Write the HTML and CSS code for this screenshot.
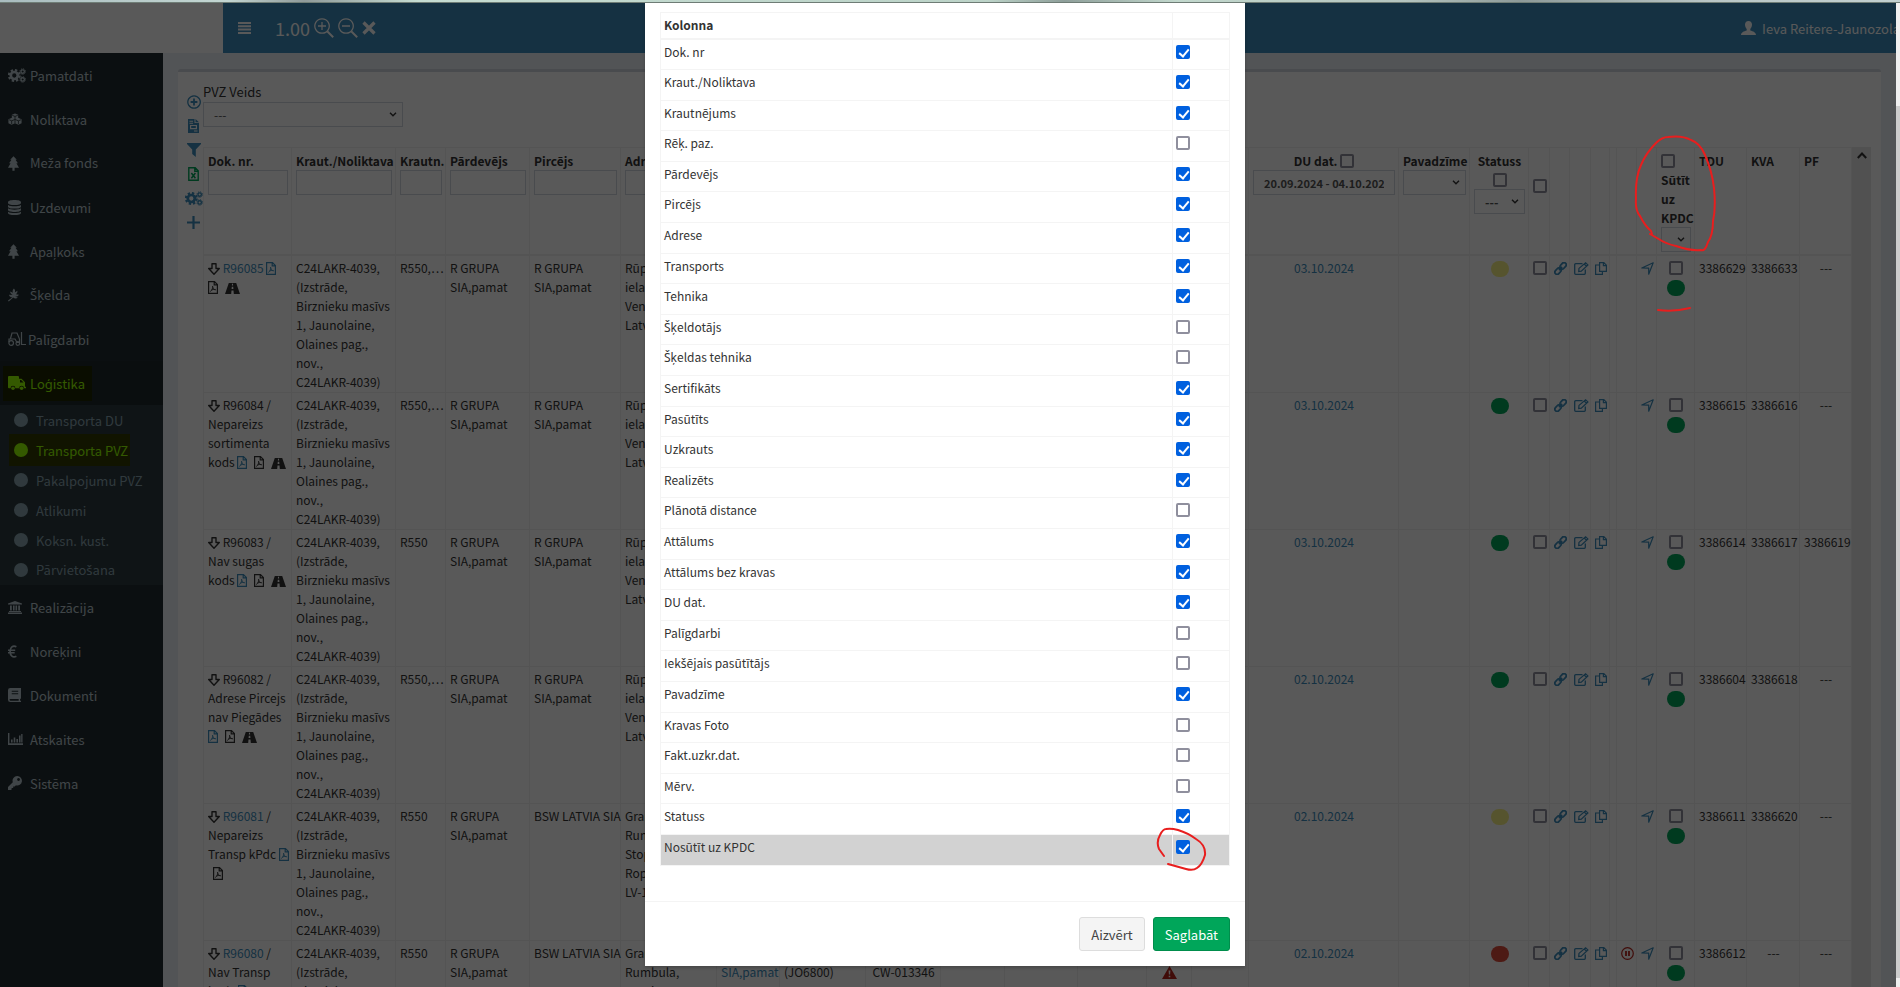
FILE: index.html
```
<!DOCTYPE html>
<html lang="lv">
<head>
    <meta charset="UTF-8">
    <meta name="viewport" content="width=device-width, initial-scale=1.0">
    <title>Transporta PVZ</title>
    <link rel="stylesheet" href="styles.css">
</head>
<body>
    <!-- icons -->
    <svg class="icon-defs" aria-hidden="true">
        <symbol id="i-cogs" viewBox="0 0 20 16"><circle cx="7" cy="8" r="3.9" fill="none" stroke="currentColor" stroke-width="3"/><circle cx="7" cy="8" r="6" fill="none" stroke="currentColor" stroke-width="2.4" stroke-dasharray="2.6 2.11"/><circle cx="16.3" cy="3.6" r="1.9" fill="none" stroke="currentColor" stroke-width="1.5"/><circle cx="16.3" cy="3.6" r="3" fill="none" stroke="currentColor" stroke-width="1.1" stroke-dasharray="1.4 .95"/><circle cx="16.3" cy="12.4" r="1.9" fill="none" stroke="currentColor" stroke-width="1.5"/><circle cx="16.3" cy="12.4" r="3" fill="none" stroke="currentColor" stroke-width="1.1" stroke-dasharray="1.4 .95"/></symbol>
        <symbol id="i-cubes" viewBox="0 0 16 14"><path fill="currentColor" d="M8 0l3.600 1.500v3.600l3.900 1.600v4.600L11.900 13 8 11.300 4.100 13 .5 11.300V6.700l3.900-1.600V1.500z"/><path fill="none" stroke="#222d32" stroke-width=".9" d="M4.800 2.200L8 3.500l3.200-1.300M8 3.500v3M1.300 7.300l2.900 1.200L8 6.900l3.900 1.600 2.900-1.200M4.200 8.500v3.700M8 7v4.200M11.900 8.500v3.700"/></symbol>
        <symbol id="i-tree" viewBox="0 0 12 16"><path fill="currentColor" d="M6 0l3.600 4H8.200l2.600 3.800H9.200L12 12.600H7.200V16H4.800v-3.400H0l2.800-4.800H1.200L3.800 4H2.400z"/></symbol>
        <symbol id="i-db" viewBox="0 0 14 16"><path fill="currentColor" d="M0 2.200C0 1 3 0 7 0s7 1 7 2.200v1C14 4.500 11 5.400 7 5.400S0 4.500 0 3.200zM0 5.200c1.600 1.100 4.200 1.400 7 1.400s5.400-.3 7-1.400v1.900c0 1.200-3 2.100-7 2.100S0 8.300 0 7.100zM0 8.900c1.600 1.100 4.200 1.400 7 1.400s5.400-.3 7-1.400v1.900c0 1.200-3 2.100-7 2.100s-7-.9-7-2.100zM0 12.500c1.600 1.100 4.200 1.400 7 1.400s5.400-.3 7-1.400v1.300C14 15.100 11 16 7 16s-7-.9-7-2.200z"/></symbol>
        <symbol id="i-leaf" viewBox="0 0 12 14"><path fill="currentColor" d="M6.500 0C5 1.500 4.700 3 5.400 4.500L2.300 3.300C2.500 5.200 3.300 6.300 5 7L1 6.600c.7 2 2 2.900 3.900 2.800L0 13.100l.8.900 4.900-4.200c1.500 1.200 3.300 1.300 5 .2L7.800 8.600c1.700.3 3-.4 4.200-2L8.500 6.200C10 5.300 10.500 4 10.200 2.400L7.400 4.300C8.100 2.800 7.700 1.200 6.500 0z"/></symbol>
        <symbol id="i-loader" viewBox="0 0 18 14"><path fill="none" stroke="currentColor" stroke-width="1.200" d="M2.500 6.500L4 1h5l2.500 6v4M1 10V7h6l2 3.500h2M13.500 0v12.500H18"/><circle cx="3.200" cy="11" r="2.300" fill="none" stroke="currentColor" stroke-width="1.200"/><circle cx="9.800" cy="11.500" r="1.800" fill="none" stroke="currentColor" stroke-width="1.200"/></symbol>
        <symbol id="i-truck" viewBox="0 0 18 14"><path fill="currentColor" d="M0 1a1 1 0 0 1 1-1h9a1 1 0 0 1 1 1v1.800h2.600L17 6.200v4.600h1v1.400h-2a2.400 2.400 0 0 0-4.800 0H7.400a2.400 2.400 0 0 0-4.800 0H1a1 1 0 0 1-1-1zM12 4v2.600h3.600L13.100 4z"/><circle cx="5" cy="12.200" r="1.800" fill="currentColor"/><circle cx="13.600" cy="12.200" r="1.800" fill="currentColor"/></symbol>
        <symbol id="i-bank" viewBox="0 0 14 13"><path fill="currentColor" d="M7 0l7 2.600v1H0v-1zM2 4.400h1.800V9.500H2zM5 4.400h1.600V9.500H5zM7.500 4.400h1.600V9.500H7.500zM10.200 4.400H12V9.500h-1.800zM1 10h12v1H1zM0 11.600h14V13H0z"/></symbol>
        <symbol id="i-euro" viewBox="0 0 10 14"><path fill="none" stroke="currentColor" stroke-width="1.900" d="M9.300 1.800C5.500-.2 2.300 2.300 2.300 7s3.200 7.200 7 5.200M0 5.600h8M0 8.400h7.400"/></symbol>
        <symbol id="i-book" viewBox="0 0 14 15"><path fill="currentColor" fill-rule="evenodd" d="M2.500 0H14v11.500h-1v2.100h1V15H2.500A2.500 2.500 0 0 1 0 12.500v-10A2.500 2.500 0 0 1 2.500 0zM4 3v1.100h7V3zm0 2.600v1.100h7V5.600zM2.500 11.800c-1.200 0-1.200 1.800 0 1.800h9v-1.800z"/></symbol>
        <symbol id="i-chart" viewBox="0 0 15 12"><path fill="currentColor" d="M0 0h1.400v10.300H15V12H0zM3 6.500h1.600v3H3zM5.700 4.500h1.600v5H5.700zM8.400 6h1.600v3.500H8.400zM11 2.500h1.600v7H11zM13.200 1h1.300v8.500h-1.300z"/></symbol>
        <symbol id="i-key" viewBox="0 0 14 14"><path fill="currentColor" fill-rule="evenodd" d="M9.300 0a4.700 4.700 0 1 1-1.400 9.200L6.800 10.400H5.200v1.500H3.600v1.500L3 14H0v-2.900l4.800-4.900A4.700 4.700 0 0 1 9.300 0zm1.200 2.100a1.400 1.400 0 1 0 .1 0z"/></symbol>
        <symbol id="i-bars" viewBox="0 0 13 12"><path fill="currentColor" d="M0 0h13v2H0zM0 3.300h13v2H0zM0 6.600h13v2H0zM0 9.900h13v2H0z"/></symbol>
        <symbol id="i-zoomin" viewBox="0 0 20 20"><path fill="none" stroke="currentColor" stroke-width="1.300" d="M8 .8a7.200 7.200 0 1 0 .1 0zM4 8h8M8 4v8"/><path stroke="currentColor" stroke-width="2" d="M13.200 13.200l6 6"/></symbol>
        <symbol id="i-zoomout" viewBox="0 0 20 20"><path fill="none" stroke="currentColor" stroke-width="1.300" d="M8 .8a7.200 7.200 0 1 0 .1 0zM4 8h8"/><path stroke="currentColor" stroke-width="2" d="M13.200 13.200l6 6"/></symbol>
        <symbol id="i-times" viewBox="0 0 14 14"><path stroke="currentColor" stroke-width="3.200" d="M1.500 1.500l11 11M12.500 1.500l-11 11"/></symbol>
        <symbol id="i-user" viewBox="0 0 15 14"><path fill="currentColor" d="M7.500 0C5.300 0 4 1.500 4 3.600c0 1.700.7 3.400 1.700 4.300v1.500C3 10.200 0 11.300 0 14h15c0-2.700-3-3.800-5.700-4.600V7.900c1-.9 1.700-2.600 1.700-4.300C11 1.500 9.700 0 7.500 0z"/></symbol>
        <symbol id="i-pluscircle" viewBox="0 0 14 14"><path fill="none" stroke="currentColor" stroke-width="1.300" d="M7 .8a6.200 6.200 0 1 0 .1 0z"/><path stroke="currentColor" stroke-width="1.800" d="M3.600 7h6.800M7 3.600v6.800"/></symbol>
        <symbol id="i-doc" viewBox="0 0 11 14"><path fill="currentColor" fill-rule="evenodd" d="M0 0h6.500v4H11v10H0zM7.500 0L11 3.200H7.500zM1.500 1.800v.9H5v-.9zm0 2v.9H5v-.9zM2 6v4.200h7V6zm1.200 1.100h4.600v2H3.200zM6 11.600v.9h3.500v-.9z"/></symbol>
        <symbol id="i-filter" viewBox="0 0 14 14"><path fill="currentColor" d="M0 0h14v1L8.800 6.600V14L5.200 11V6.600L0 1z"/></symbol>
        <symbol id="i-excel" viewBox="0 0 11 14"><path fill="none" stroke="currentColor" stroke-width="1.400" d="M.8.8h6.400l3 3v9.400H.8zM6.800.8v3.400h3.400"/><path stroke="currentColor" stroke-width="1.500" d="M3.400 6l4 5.200M7.400 6l-4 5.200"/></symbol>
        <symbol id="i-plus" viewBox="0 0 13 13"><path stroke="currentColor" stroke-width="2.200" d="M0 6.500h13M6.500 0v13"/></symbol>
        <symbol id="i-down" viewBox="0 0 12 12"><path fill="none" stroke="currentColor" stroke-width="1.400" stroke-linejoin="round" d="M4 .7h4v4.800h3.300L6 11.200.7 5.500H4z"/></symbol>
        <symbol id="i-pdf" viewBox="0 0 10 13"><path fill="none" stroke="currentColor" stroke-width="1.200" d="M.6.6h5.900l2.900 2.900v8.900H.6zM6.200.6v3.200h3.200"/><path fill="none" stroke="currentColor" stroke-width=".9" d="M2.200 10.500C4 9.500 5 7 4.600 5M4.600 5.500C5 8 6.200 9 8 8.800M3.200 9.200c1.300-.7 2.600-.9 4-.8"/></symbol>
        <symbol id="i-road" viewBox="0 0 15 11"><path fill="currentColor" fill-rule="evenodd" d="M3.800 0h7.400L15 11H8.800l-.3-3.500h-2L6.200 11H0zM7 .8l-.1 1.700h1.200L8 .8zM6.800 3.700l-.2 2.300h1.800l-.2-2.300z"/></symbol>
        <symbol id="i-link" viewBox="0 0 14 14"><g fill="none" stroke="currentColor" stroke-width="1.900"><rect x="6" y="1.700" width="7.600" height="4.800" rx="2.400" transform="rotate(-48 9.800 4.100)"/><rect x=".5" y="7.500" width="7.600" height="4.800" rx="2.400" transform="rotate(-48 4.300 9.900)"/><path d="M5.400 8.700l3.300-3.500"/></g></symbol>
        <symbol id="i-edit" viewBox="0 0 15 13"><path fill="none" stroke="currentColor" stroke-width="1.300" d="M8.500 1.700H1.700a1 1 0 0 0-1 1v8.600a1 1 0 0 0 1 1h8.600a1 1 0 0 0 1-1V7.500"/><path fill="none" stroke="currentColor" stroke-width="1.200" d="M5 6.400L11.600.8l2.300 2.100-6.600 6.200-2.600.4zM10.200 2l2.200 2.200"/></symbol>
        <symbol id="i-copy" viewBox="0 0 12 13"><path fill="none" stroke="currentColor" stroke-width="1.200" d="M4.600.6h4.200l2.600 2.600v6.200H4.600zM8.400.6v3h3M4.600 3H.6v9.400h6.800v-3"/></symbol>
        <symbol id="i-send" viewBox="0 0 13 13"><path fill="none" stroke="currentColor" stroke-width="1.200" stroke-linejoin="round" d="M12.200.8L7.700 12.200V6.100L.8 6z"/></symbol>
        <symbol id="i-pause" viewBox="0 0 13 13"><circle cx="6.500" cy="6.500" r="5.800" fill="none" stroke="currentColor" stroke-width="1.200"/><path stroke="currentColor" stroke-width="1.800" d="M5 4v5M8 4v5"/></symbol>
        <symbol id="i-warn" viewBox="0 0 15 13"><path fill="currentColor" fill-rule="evenodd" d="M7.500 0L15 13H0zM6.600 4.400l.3 4.200h1.200l.3-4.200zm.1 5.300v1.600h1.600V9.700z"/></symbol>
        <symbol id="i-chev" viewBox="0 0 8 5"><path fill="none" stroke="currentColor" stroke-width="1.400" d="M1 .7l3 3 3-3"/></symbol>
        <symbol id="i-up" viewBox="0 0 10 7"><path fill="none" stroke="currentColor" stroke-width="2" d="M.8 6L5 1.500 9.200 6"/></symbol>
    </svg>

    <div class="top-strip"></div>
    <div class="app">
        <header class="main-header">
            <div class="logo"></div>
            <nav class="navbar">
                <button type="button" class="icon-btn menu-btn" aria-label="Izvēlne"><svg width="13" height="12"><use href="#i-bars"/></svg></button>
                <span class="zoom-value">1.00</span>
                <button type="button" class="icon-btn" aria-label="Tuvināt"><svg width="20" height="20"><use href="#i-zoomin"/></svg></button>
                <button type="button" class="icon-btn" aria-label="Tālināt"><svg width="20" height="20"><use href="#i-zoomout"/></svg></button>
                <button type="button" class="icon-btn" aria-label="Atiestatīt"><svg width="14" height="14"><use href="#i-times"/></svg></button>
                <a href="#" class="user"><svg width="15" height="14"><use href="#i-user"/></svg><span>Ieva Reitere-Jaunozola</span></a>
            </nav>
        </header>

        <div class="wrapper">
            <aside class="sidebar">
                <ul class="menu">
                    <li><a href="#"><svg width="18" height="15"><use href="#i-cogs"/></svg><span>Pamatdati</span></a></li>
                    <li><a href="#"><svg width="14" height="13"><use href="#i-cubes"/></svg><span>Noliktava</span></a></li>
                    <li><a href="#"><svg width="11" height="15"><use href="#i-tree"/></svg><span>Me<b class="lv">ž</b>a fonds</span></a></li>
                    <li><a href="#"><svg width="13" height="15"><use href="#i-db"/></svg><span>Uzdevumi</span></a></li>
                    <li><a href="#"><svg width="11" height="15"><use href="#i-tree"/></svg><span>Apaļkoks</span></a></li>
                    <li><a href="#"><svg width="11" height="14"><use href="#i-leaf"/></svg><span><b class="lv">Šķ</b>elda</span></a></li>
                    <li class="tight"><a href="#"><svg width="18" height="14"><use href="#i-loader"/></svg><span>Palīgdarbi</span></a></li>
                    <li class="active">
                        <a href="#"><mark><svg width="18" height="14"><use href="#i-truck"/></svg><span>Loģistika</span></mark></a>
                        <ul class="submenu">
                            <li><a href="#"><i></i>Transporta DU</a></li>
                            <li><a href="#"><mark><i></i>Transporta PVZ</mark></a></li>
                            <li><a href="#"><i></i>Pakalpojumu PVZ</a></li>
                            <li><a href="#"><i></i>Atlikumi</a></li>
                            <li><a href="#"><i></i>Koksn. kust.</a></li>
                            <li><a href="#"><i></i><span>Pārvieto<b class="lv">š</b>ana</span></a></li>
                        </ul>
                    </li>
                    <li><a href="#"><svg width="14" height="13"><use href="#i-bank"/></svg><span>Realizācija</span></a></li>
                    <li><a href="#"><svg width="9" height="13"><use href="#i-euro"/></svg><span>Norēķini</span></a></li>
                    <li><a href="#"><svg width="13" height="14"><use href="#i-book"/></svg><span>Dokumenti</span></a></li>
                    <li><a href="#"><svg width="15" height="12"><use href="#i-chart"/></svg><span>Atskaites</span></a></li>
                    <li><a href="#"><svg width="14" height="14"><use href="#i-key"/></svg><span>Sistēma</span></a></li>
                </ul>
            </aside>

            <main class="content">
                <div class="box">
                    <div class="tools">
                        <button type="button" class="icon-btn" aria-label="Pievienot"><svg width="14" height="14"><use href="#i-pluscircle"/></svg></button>
                        <button type="button" class="icon-btn" aria-label="Dokuments"><svg width="11" height="14"><use href="#i-doc"/></svg></button>
                        <button type="button" class="icon-btn" aria-label="Filtrs"><svg width="14" height="14"><use href="#i-filter"/></svg></button>
                        <button type="button" class="icon-btn green" aria-label="Excel"><svg width="11" height="14"><use href="#i-excel"/></svg></button>
                        <button type="button" class="icon-btn" aria-label="Kolonnas"><svg width="18" height="15"><use href="#i-cogs"/></svg></button>
                        <button type="button" class="icon-btn" aria-label="Jauns"><svg width="13" height="13"><use href="#i-plus"/></svg></button>
                    </div>
                    <div class="list">
                        <label for="pvz-veids" class="filter-label">PVZ Veids</label>
                        <div class="select veids"><select id="pvz-veids"><option>---</option></select><svg width="8" height="5"><use href="#i-chev"/></svg></div>
                        <div class="grid-wrap">
                            <table class="grid">
                                <colgroup>
                                    <col class="w88"><col class="w104"><col class="w50"><col class="w84"><col class="w91"><col class="w96"><col class="w63">
                                    <col class="w86"><col class="w75"><col class="w64"><col><col class="w69"><col class="w45"><col class="w57">
                                    <col class="w150"><col class="w71"><col class="w59"><col class="w21"><col class="w20"><col class="w21"><col class="w19">
                                    <col class="w7"><col class="w20"><col class="w20"><col class="w38"><col class="w52"><col class="w53"><col class="w52">
                                </colgroup>
                                <thead>
                                    <tr>
                                        <th>Dok. nr.<input type="text" aria-label="Dok. nr."></th>
                                        <th>Kraut./Noliktava<input type="text" aria-label="Kraut./Noliktava"></th>
                                        <th>Krautn.<input type="text" aria-label="Krautn."></th>
                                        <th>Pārdevējs<input type="text" aria-label="Pārdevējs"></th>
                                        <th>Pircējs<input type="text" aria-label="Pircējs"></th>
                                        <th>Adrese<input type="text" aria-label="Adrese"></th>
                                        <th></th><th></th><th></th><th></th><th></th><th></th><th></th><th></th>
                                        <th class="c">DU dat. <input type="checkbox" aria-label="DU dat."><input type="text" class="dates" aria-label="Periods" value="20.09.2024 - 04.10.2024"></th>
                                        <th>Pavadzīme<div class="select"><select aria-label="Pavadzīme"><option></option></select><svg width="8" height="5"><use href="#i-chev"/></svg></div></th>
                                        <th class="c">Statuss<br><input type="checkbox" aria-label="Statuss"><div class="select"><select aria-label="Statusa filtrs"><option>---</option></select><svg width="8" height="5"><use href="#i-chev"/></svg></div></th>
                                        <th class="all"><input type="checkbox" aria-label="Atzīmēt visus"></th>
                                        <th></th><th></th><th></th><th></th><th></th><th></th>
                                        <th><input type="checkbox" id="kpdc"><label for="kpdc">Sūtīt<br>uz<br>KPDC</label><div class="select small"><select aria-label="KPDC filtrs"><option>---</option></select><svg width="8" height="5"><use href="#i-chev"/></svg></div></th>
                                        <th>TDU</th>
                                        <th>KVA</th>
                                        <th>PF</th>
                                    </tr>
                                </thead>
                                <tbody>
                                    <tr>
                                        <td><svg width="12" height="12"><use href="#i-down"/></svg> <a href="#">R96085</a> <a href="#"><svg width="10" height="13"><use href="#i-pdf"/></svg></a><br><svg class="gap" width="10" height="13"><use href="#i-pdf"/></svg><svg width="15" height="11"><use href="#i-road"/></svg></td>
                                        <td>C24LAKR-4039,<br>(Izstrāde,<br>Birznieku masīvs<br>1, Jaunolaine,<br>Olaines pag.,<br>nov.,<br>C24LAKR-4039)</td>
                                        <td>R550,…</td>
                                        <td>R GRUPA<br>SIA,pamat</td>
                                        <td>R GRUPA<br>SIA,pamat</td>
                                        <td>Rūpniecības<br>iela,<br>Ventspils,<br>Latvija</td>
                                        <td></td><td></td><td></td><td></td><td></td><td></td><td></td><td></td>
                                        <td class="c"><a href="#">03.10.2024</a></td>
                                        <td></td>
                                        <td class="c"><i class="dot yellow"></i></td>
                                        <td><input type="checkbox" aria-label="R96085"></td>
                                        <td><a href="#"><svg width="13" height="13"><use href="#i-link"/></svg></a></td>
                                        <td><a href="#"><svg width="15" height="13"><use href="#i-edit"/></svg></a></td>
                                        <td><a href="#"><svg width="12" height="13"><use href="#i-copy"/></svg></a></td>
                                        <td></td>
                                        <td></td>
                                        <td><a href="#"><svg width="13" height="13"><use href="#i-send"/></svg></a></td>
                                        <td class="c"><input type="checkbox" aria-label="KPDC R96085"><i class="dot green"></i></td>
                                        <td class="c">3386629</td>
                                        <td class="c">3386633</td>
                                        <td class="c">---</td>
                                    </tr>
                                    <tr>
                                        <td><svg width="12" height="12"><use href="#i-down"/></svg> R96084 /<br>Nepareizs<br>sortimenta<br>kods <a href="#"><svg class="gap" width="10" height="13"><use href="#i-pdf"/></svg></a><svg class="gap" width="10" height="13"><use href="#i-pdf"/></svg><svg width="15" height="11"><use href="#i-road"/></svg></td>
                                        <td>C24LAKR-4039,<br>(Izstrāde,<br>Birznieku masīvs<br>1, Jaunolaine,<br>Olaines pag.,<br>nov.,<br>C24LAKR-4039)</td>
                                        <td>R550,…</td>
                                        <td>R GRUPA<br>SIA,pamat</td>
                                        <td>R GRUPA<br>SIA,pamat</td>
                                        <td>Rūpniecības<br>iela,<br>Ventspils,<br>Latvija</td>
                                        <td></td><td></td><td></td><td></td><td></td><td></td><td></td><td></td>
                                        <td class="c"><a href="#">03.10.2024</a></td>
                                        <td></td>
                                        <td class="c"><i class="dot green"></i></td>
                                        <td><input type="checkbox" aria-label="R96084"></td>
                                        <td><a href="#"><svg width="13" height="13"><use href="#i-link"/></svg></a></td>
                                        <td><a href="#"><svg width="15" height="13"><use href="#i-edit"/></svg></a></td>
                                        <td><a href="#"><svg width="12" height="13"><use href="#i-copy"/></svg></a></td>
                                        <td></td>
                                        <td></td>
                                        <td><a href="#"><svg width="13" height="13"><use href="#i-send"/></svg></a></td>
                                        <td class="c"><input type="checkbox" aria-label="KPDC R96084"><i class="dot green"></i></td>
                                        <td class="c">3386615</td>
                                        <td class="c">3386616</td>
                                        <td class="c">---</td>
                                    </tr>
                                    <tr>
                                        <td><svg width="12" height="12"><use href="#i-down"/></svg> R96083 /<br>Nav sugas<br>kods <a href="#"><svg class="gap" width="10" height="13"><use href="#i-pdf"/></svg></a><svg class="gap" width="10" height="13"><use href="#i-pdf"/></svg><svg width="15" height="11"><use href="#i-road"/></svg></td>
                                        <td>C24LAKR-4039,<br>(Izstrāde,<br>Birznieku masīvs<br>1, Jaunolaine,<br>Olaines pag.,<br>nov.,<br>C24LAKR-4039)</td>
                                        <td>R550</td>
                                        <td>R GRUPA<br>SIA,pamat</td>
                                        <td>R GRUPA<br>SIA,pamat</td>
                                        <td>Rūpniecības<br>iela,<br>Ventspils,<br>Latvija</td>
                                        <td></td><td></td><td></td><td></td><td></td><td></td><td></td><td></td>
                                        <td class="c"><a href="#">03.10.2024</a></td>
                                        <td></td>
                                        <td class="c"><i class="dot green"></i></td>
                                        <td><input type="checkbox" aria-label="R96083"></td>
                                        <td><a href="#"><svg width="13" height="13"><use href="#i-link"/></svg></a></td>
                                        <td><a href="#"><svg width="15" height="13"><use href="#i-edit"/></svg></a></td>
                                        <td><a href="#"><svg width="12" height="13"><use href="#i-copy"/></svg></a></td>
                                        <td></td>
                                        <td></td>
                                        <td><a href="#"><svg width="13" height="13"><use href="#i-send"/></svg></a></td>
                                        <td class="c"><input type="checkbox" aria-label="KPDC R96083"><i class="dot green"></i></td>
                                        <td class="c">3386614</td>
                                        <td class="c">3386617</td>
                                        <td class="c">3386619</td>
                                    </tr>
                                    <tr>
                                        <td><svg width="12" height="12"><use href="#i-down"/></svg> R96082 /<br>Adrese Pircejs<br>nav Piegādes<br><a href="#"><svg class="gap" width="10" height="13"><use href="#i-pdf"/></svg></a><svg class="gap" width="10" height="13"><use href="#i-pdf"/></svg><svg width="15" height="11"><use href="#i-road"/></svg></td>
                                        <td>C24LAKR-4039,<br>(Izstrāde,<br>Birznieku masīvs<br>1, Jaunolaine,<br>Olaines pag.,<br>nov.,<br>C24LAKR-4039)</td>
                                        <td>R550,…</td>
                                        <td>R GRUPA<br>SIA,pamat</td>
                                        <td>R GRUPA<br>SIA,pamat</td>
                                        <td>Rūpniecības<br>iela,<br>Ventspils,<br>Latvija</td>
                                        <td></td><td></td><td></td><td></td><td></td><td></td><td></td><td></td>
                                        <td class="c"><a href="#">02.10.2024</a></td>
                                        <td></td>
                                        <td class="c"><i class="dot green"></i></td>
                                        <td><input type="checkbox" aria-label="R96082"></td>
                                        <td><a href="#"><svg width="13" height="13"><use href="#i-link"/></svg></a></td>
                                        <td><a href="#"><svg width="15" height="13"><use href="#i-edit"/></svg></a></td>
                                        <td><a href="#"><svg width="12" height="13"><use href="#i-copy"/></svg></a></td>
                                        <td></td>
                                        <td></td>
                                        <td><a href="#"><svg width="13" height="13"><use href="#i-send"/></svg></a></td>
                                        <td class="c"><input type="checkbox" aria-label="KPDC R96082"><i class="dot green"></i></td>
                                        <td class="c">3386604</td>
                                        <td class="c">3386618</td>
                                        <td class="c">---</td>
                                    </tr>
                                    <tr>
                                        <td><svg width="12" height="12"><use href="#i-down"/></svg> <a href="#">R96081</a> /<br>Nepareizs<br>Transp kPdc <a href="#"><svg width="10" height="13"><use href="#i-pdf"/></svg></a><br><svg class="indent" width="10" height="13"><use href="#i-pdf"/></svg></td>
                                        <td>C24LAKR-4039,<br>(Izstrāde,<br>Birznieku masīvs<br>1, Jaunolaine,<br>Olaines pag.,<br>nov.,<br>C24LAKR-4039)</td>
                                        <td>R550</td>
                                        <td>R GRUPA<br>SIA,pamat</td>
                                        <td>BSW LATVIA SIA</td>
                                        <td>Granīta iela,<br>Rumbula,<br>Stopiņu pag.,<br>Ropažu nov.,<br>LV-1057</td>
                                        <td></td><td></td><td></td><td></td><td></td><td></td><td></td><td></td>
                                        <td class="c"><a href="#">02.10.2024</a></td>
                                        <td></td>
                                        <td class="c"><i class="dot yellow"></i></td>
                                        <td><input type="checkbox" aria-label="R96081"></td>
                                        <td><a href="#"><svg width="13" height="13"><use href="#i-link"/></svg></a></td>
                                        <td><a href="#"><svg width="15" height="13"><use href="#i-edit"/></svg></a></td>
                                        <td><a href="#"><svg width="12" height="13"><use href="#i-copy"/></svg></a></td>
                                        <td></td>
                                        <td></td>
                                        <td><a href="#"><svg width="13" height="13"><use href="#i-send"/></svg></a></td>
                                        <td class="c"><input type="checkbox" aria-label="KPDC R96081"><i class="dot green"></i></td>
                                        <td class="c">3386611</td>
                                        <td class="c">3386620</td>
                                        <td class="c">---</td>
                                    </tr>
                                    <tr>
                                        <td><svg width="12" height="12"><use href="#i-down"/></svg> <a href="#">R96080</a> /<br>Nav Transp<br>kPdc <a href="#"><svg width="10" height="13"><use href="#i-pdf"/></svg></a></td>
                                        <td>C24LAKR-4039,<br>(Izstrāde,<br>Birznieku masīvs<br>1, Jaunolaine,<br>Olaines pag.,<br>nov.,<br>C24LAKR-4039)</td>
                                        <td>R550</td>
                                        <td>R GRUPA<br>SIA,pamat</td>
                                        <td>BSW LATVIA SIA</td>
                                        <td>Granīta iela,<br>Rumbula,<br>Stopiņu pag.,<br>Ropažu nov.,<br>LV-1057</td>
                                        <td><a href="#">R GRUPA<br>SIA,pamat</a></td>
                                        <td>Scania<br>(JO6800)</td>
                                        <td class="c">Volvo<br>CW-013346<br>500</td>
                                        <td></td><td></td><td></td>
                                        <td class="c"><br><svg class="red" width="15" height="13"><use href="#i-warn"/></svg></td>
                                        <td></td>
                                        <td class="c"><a href="#">02.10.2024</a></td>
                                        <td></td>
                                        <td class="c"><i class="dot red"></i></td>
                                        <td><input type="checkbox" aria-label="R96080"></td>
                                        <td><a href="#"><svg width="13" height="13"><use href="#i-link"/></svg></a></td>
                                        <td><a href="#"><svg width="15" height="13"><use href="#i-edit"/></svg></a></td>
                                        <td><a href="#"><svg width="12" height="13"><use href="#i-copy"/></svg></a></td>
                                        <td></td>
                                        <td><svg class="red" width="13" height="13"><use href="#i-pause"/></svg></td>
                                        <td><a href="#"><svg width="13" height="13"><use href="#i-send"/></svg></a></td>
                                        <td class="c"><input type="checkbox" aria-label="KPDC R96080"><i class="dot green"></i></td>
                                        <td class="c">3386612</td>
                                        <td class="c">---</td>
                                        <td class="c">---</td>
                                    </tr>
                                </tbody>
                            </table>
                            <div class="grid-scroll"><svg width="10" height="7"><use href="#i-up"/></svg></div>
                        </div>
                    </div>
                </div>
            </main>
        </div>
    </div>

    <div class="page-scroll"><div class="thumb"></div></div>

    <div class="overlay">
        <div class="modal" role="dialog" aria-label="Kolonnas">
            <div class="modal-body">
                <table class="columns">
                    <thead><tr><th>Kolonna</th><th class="check"></th></tr></thead>
                    <tbody>
                        <tr><td><label for="c1">Dok. nr</label></td><td><input type="checkbox" id="c1" checked></td></tr>
                        <tr><td><label for="c2">Kraut./Noliktava</label></td><td><input type="checkbox" id="c2" checked></td></tr>
                        <tr><td><label for="c3">Krautnējums</label></td><td><input type="checkbox" id="c3" checked></td></tr>
                        <tr><td><label for="c4">Rēķ. paz.</label></td><td><input type="checkbox" id="c4"></td></tr>
                        <tr><td><label for="c5">Pārdevējs</label></td><td><input type="checkbox" id="c5" checked></td></tr>
                        <tr><td><label for="c6">Pircējs</label></td><td><input type="checkbox" id="c6" checked></td></tr>
                        <tr><td><label for="c7">Adrese</label></td><td><input type="checkbox" id="c7" checked></td></tr>
                        <tr><td><label for="c8">Transports</label></td><td><input type="checkbox" id="c8" checked></td></tr>
                        <tr><td><label for="c9">Tehnika</label></td><td><input type="checkbox" id="c9" checked></td></tr>
                        <tr><td><label for="c10"><b class="lv">Šķ</b>eldotājs</label></td><td><input type="checkbox" id="c10"></td></tr>
                        <tr><td><label for="c11"><b class="lv">Šķ</b>eldas tehnika</label></td><td><input type="checkbox" id="c11"></td></tr>
                        <tr><td><label for="c12">Sertifikāts</label></td><td><input type="checkbox" id="c12" checked></td></tr>
                        <tr><td><label for="c13">Pasūtīts</label></td><td><input type="checkbox" id="c13" checked></td></tr>
                        <tr><td><label for="c14">Uzkrauts</label></td><td><input type="checkbox" id="c14" checked></td></tr>
                        <tr><td><label for="c15">Realizēts</label></td><td><input type="checkbox" id="c15" checked></td></tr>
                        <tr><td><label for="c16">Plānotā distance</label></td><td><input type="checkbox" id="c16"></td></tr>
                        <tr><td><label for="c17">Attālums</label></td><td><input type="checkbox" id="c17" checked></td></tr>
                        <tr><td><label for="c18">Attālums bez kravas</label></td><td><input type="checkbox" id="c18" checked></td></tr>
                        <tr><td><label for="c19">DU dat.</label></td><td><input type="checkbox" id="c19" checked></td></tr>
                        <tr><td><label for="c20">Palīgdarbi</label></td><td><input type="checkbox" id="c20"></td></tr>
                        <tr><td><label for="c21">Iek<b class="lv">š</b>ējais pasūtītājs</label></td><td><input type="checkbox" id="c21"></td></tr>
                        <tr><td><label for="c22">Pavadzīme</label></td><td><input type="checkbox" id="c22" checked></td></tr>
                        <tr><td><label for="c23">Kravas Foto</label></td><td><input type="checkbox" id="c23"></td></tr>
                        <tr><td><label for="c24">Fakt.uzkr.dat.</label></td><td><input type="checkbox" id="c24"></td></tr>
                        <tr><td><label for="c25">Mērv.</label></td><td><input type="checkbox" id="c25"></td></tr>
                        <tr><td><label for="c26">Statuss</label></td><td><input type="checkbox" id="c26" checked></td></tr>
                        <tr class="hover"><td><label for="c27">Nosūtīt uz KPDC</label></td><td><input type="checkbox" id="c27" checked></td></tr>
                    </tbody>
                </table>
            </div>
            <div class="modal-footer">
                <button type="button" class="btn">Aizvērt</button>
                <button type="button" class="btn btn-success">Saglabāt</button>
            </div>
            <svg class="pen pen-row" width="52" height="46" viewBox="0 0 52 46"><path d="M8 31L3 24Q0 17 4 10Q7 4 10 4Q15 3 22 5Q32 8 40 14Q50 20 49 30Q46 40 41 43Q37 46 30 44L12 39"/></svg>
        </div>
    </div>

    <svg class="pen pen-header" width="86" height="184" viewBox="0 0 86 184"><path d="M18 101L17 98Q11 93 6 83Q1 77 2 66Q1 45 7 32Q12 20 22 10Q28 4 34 4Q48 2 57 7Q66 10 71 22Q78 38 80 55Q82 75 79 88Q79 102 74 109Q71 119 67 117Q56 118 42 113Q32 111 23 105L16 101M24 177Q40 179 56 175"/></svg>
</body>
</html>
```
FILE: styles.css
```
* {
    box-sizing: border-box;
}

body {
    margin: 0;
    height: 100vh;
    overflow: hidden;
    position: relative;
    font-family: "Noto Sans CJK JP", "Noto Sans", sans-serif;
    font-size: 12px;
    line-height: 19px;
    color: #333;
    background: #ecf0f5;
}

a {
    color: #3c8dbc;
    text-decoration: none;
}

svg {
    vertical-align: -2px;
}

ul {
    list-style: none;
    margin: 0;
    padding: 0;
}

/* letters the main font does not have */
.lv {
    font-family: "Noto Sans", sans-serif;
    font-weight: normal;
}

.icon-defs {
    position: absolute;
    width: 0;
    height: 0;
}

.top-strip {
    height: 3px;
    background: linear-gradient(90deg, #a9bcbf, #c3d6d2 12%, #8f9a9a 16%, #c5dcd2 22%, #bcd3c8 52%, #8e9f9a 56%, #c2d8cd 62%, #b4c4bf 74%, #8d9a99 80%, #b9c6c6 90%, #c2d0d0);
    border-bottom: 1px solid #6f7d76;
}

.app {
    display: flex;
    flex-direction: column;
    height: calc(100vh - 3px);
}

/* header */
.main-header {
    display: flex;
    flex: none;
    height: 50px;
}

.logo {
    width: 223px;
    background: #fff;
}

.navbar {
    flex: 1;
    display: flex;
    align-items: center;
    padding-left: 15px;
    background: #3c8dbc;
    color: #fff;
    overflow: hidden;
}

.icon-btn {
    border: 0;
    padding: 0;
    background: none;
    color: inherit;
    line-height: 0;
    margin-right: 4px;
}

.menu-btn {
    margin-right: 24px;
}

.zoom-value {
    font-size: 18px;
    margin-right: 4px;
}

.user {
    display: flex;
    align-items: center;
    gap: 6px;
    margin-left: auto;
    color: #fff;
    font-size: 13px;
    white-space: nowrap;
}

/* sidebar */
.wrapper {
    flex: 1;
    display: flex;
    min-height: 0;
}

.sidebar {
    width: 163px;
    flex: none;
    background: #222d32;
}

.menu > li > a {
    display: flex;
    align-items: center;
    height: 44px;
    padding-left: 8px;
    color: #b8c7ce;
    font-size: 13px;
}

.menu > li > a svg {
    margin-right: auto;
}

.menu > li > a span {
    width: 133px;
}

.menu > li.tight > a span {
    width: 135px;
}

mark {
    display: flex;
    align-items: center;
    color: #95ff00;
}

.active > a {
    background: #1e282c;
}

.active > a mark {
    height: 35px;
    width: 89px;
    margin-left: -5px;
    padding-left: 5px;
    background: #1f2500;
}

.menu .active > a mark svg {
    margin-right: 4px;
}

.menu .active > a mark span {
    width: auto;
}

.submenu {
    background: #2c3b41;
}

.submenu a {
    display: flex;
    align-items: center;
    height: 30px;
    padding-left: 14px;
    color: #8aa4af;
    font-size: 13px;
}

.submenu i {
    width: 14px;
    height: 14px;
    margin-right: 8px;
    border-radius: 50%;
    background: currentColor;
}

.submenu mark {
    height: 32px;
    width: 121px;
    margin-left: -5px;
    padding-left: 5px;
    background: #323a00;
}

/* content */
.content {
    flex: 1;
    min-width: 0;
    padding: 16px 19px 0 15px;
}

.box {
    display: flex;
    height: 100%;
    overflow: hidden;
    border-top: 3px solid #d2d6de;
    border-radius: 3px 3px 0 0;
    background: #fff;
}

.tools {
    display: flex;
    flex-direction: column;
    align-items: center;
    width: 25px;
    padding: 18px 0 0 6px;
    color: #3c8dbc;
}

.tools .icon-btn {
    display: flex;
    align-items: center;
    justify-content: center;
    height: 24px;
    flex: none;
    margin: 0;
}

.tools .green {
    color: #00a65a;
}

.list {
    flex: 1;
    min-width: 0;
    padding: 10px 10px 0 0;
}

.filter-label {
    display: block;
    height: 20px;
    font-size: 13px;
}

input[type="text"],
select {
    display: block;
    width: 100%;
    height: 25px;
    padding: 0 10px;
    border: 1px solid #d2d6de;
    border-radius: 0;
    background: #fff;
    color: #555;
    font: inherit;
    font-size: 12px;
    appearance: none;
}

.select {
    position: relative;
}

.select svg {
    position: absolute;
    right: 6px;
    top: 10px;
}

.veids {
    width: 200px;
    margin-bottom: 20px;
}

input[type="checkbox"] {
    appearance: none;
    display: inline-block;
    width: 14px;
    height: 14px;
    margin: 0;
    border: 2px solid #8f8f9d;
    border-radius: 2px;
    background: #fff;
    vertical-align: -2px;
    position: relative;
}

input[type="checkbox"]:checked {
    border-color: #0060df;
    background: #0060df;
}

input[type="checkbox"]:checked::after {
    content: "";
    position: absolute;
    left: 3px;
    top: 0;
    width: 4px;
    height: 8px;
    border: solid #fff;
    border-width: 0 2px 2px 0;
    transform: rotate(40deg);
}

/* data table */
.grid-wrap {
    display: flex;
}

.grid {
    flex: 1;
    width: 100%;
    min-width: 0;
    table-layout: fixed;
    border-collapse: collapse;
    white-space: nowrap;
}

.grid th,
.grid td {
    border: 1px solid #f0f0f0;
    padding: 2px 3px 1px 4px;
    text-align: left;
    vertical-align: top;
}

.grid th {
    height: 107px;
    border-bottom-width: 2px;
    padding-top: 3px;
}

.grid .c {
    text-align: center;
}

.grid .all {
    padding-top: 28px;
}

.grid th label {
    display: block;
}

.grid .dates {
    font-size: 11px;
    font-weight: bold;
}

.grid .gap {
    margin-right: 7px;
}

.grid .indent {
    margin-left: 5px;
}

.small select {
    padding-right: 18px;
}

.dot {
    display: block;
    width: 18px;
    height: 16px;
    margin: 3px auto 0;
    border-radius: 9px;
}

.yellow {
    background: #f7f084;
}

.dot.green {
    background: #00a65a;
}

.dot.red {
    background: #dd4b39;
}

svg.red {
    color: #b8241c;
}

.grid-scroll {
    flex: none;
    width: 19px;
    padding-top: 5px;
    background: #e8e8e8;
    text-align: center;
    line-height: 0;
}

.w7 { width: 7px; }
.w19 { width: 19px; }
.w20 { width: 20px; }
.w21 { width: 21px; }
.w38 { width: 38px; }
.w45 { width: 45px; }
.w50 { width: 50px; }
.w52 { width: 52px; }
.w53 { width: 53px; }
.w57 { width: 57px; }
.w59 { width: 59px; }
.w63 { width: 63px; }
.w64 { width: 64px; }
.w69 { width: 69px; }
.w71 { width: 71px; }
.w75 { width: 75px; }
.w84 { width: 84px; }
.w86 { width: 86px; }
.w88 { width: 88px; }
.w91 { width: 91px; }
.w96 { width: 96px; }
.w104 { width: 104px; }
.w150 { width: 150px; }

/* page scrollbar */
.page-scroll {
    position: absolute;
    top: 3px;
    right: 0;
    bottom: 0;
    width: 4px;
    padding: 103px 0 9px;
    background: #f0f0f0;
    z-index: 3;
}

.thumb {
    height: 100%;
    background: #cdcdcd;
}

/* modal */
.overlay {
    position: absolute;
    top: 3px;
    right: 0;
    bottom: 0;
    left: 0;
    padding-right: 10px;
    background: rgba(0, 0, 0, .65);
    z-index: 2;
}

.modal {
    position: relative;
    width: 600px;
    margin: 0 auto;
    background: #fff;
    box-shadow: 0 2px 3px rgba(0, 0, 0, .2);
}

.modal-body {
    padding: 9px 15px 35px;
}

.columns {
    width: 100%;
    border-collapse: collapse;
}

.columns th,
.columns td {
    height: 31px;
    padding: 2px 3px 0;
    border: 1px solid #f4f4f4;
    text-align: left;
    vertical-align: top;
}

.columns tr:nth-child(5n) td,
.columns tr:nth-child(5n+3) td {
    height: 30px;
}

.columns th {
    height: 26px;
    border-bottom-width: 2px;
}

.columns .check {
    width: 57px;
}

.columns .hover td {
    background: #d2d2d2;
}

.modal-footer {
    display: flex;
    justify-content: flex-end;
    gap: 8px;
    padding: 15px;
    border-top: 1px solid #f4f4f4;
}

.btn {
    height: 34px;
    padding: 0 11px;
    border: 1px solid #ddd;
    border-radius: 3px;
    background: #f4f4f4;
    color: #444;
    font: inherit;
    font-size: 13px;
}

.btn-success {
    border-color: #008d4c;
    background: #00a65a;
    color: #fff;
}

/* pen marks */
.pen {
    position: absolute;
    fill: none;
    stroke: #e81e1e;
    stroke-width: 2;
    stroke-linecap: round;
    stroke-linejoin: round;
}

.pen-row {
    right: 37px;
    bottom: 95px;
}

.pen-header {
    top: 133px;
    right: 180px;
    z-index: 4;
}
```
